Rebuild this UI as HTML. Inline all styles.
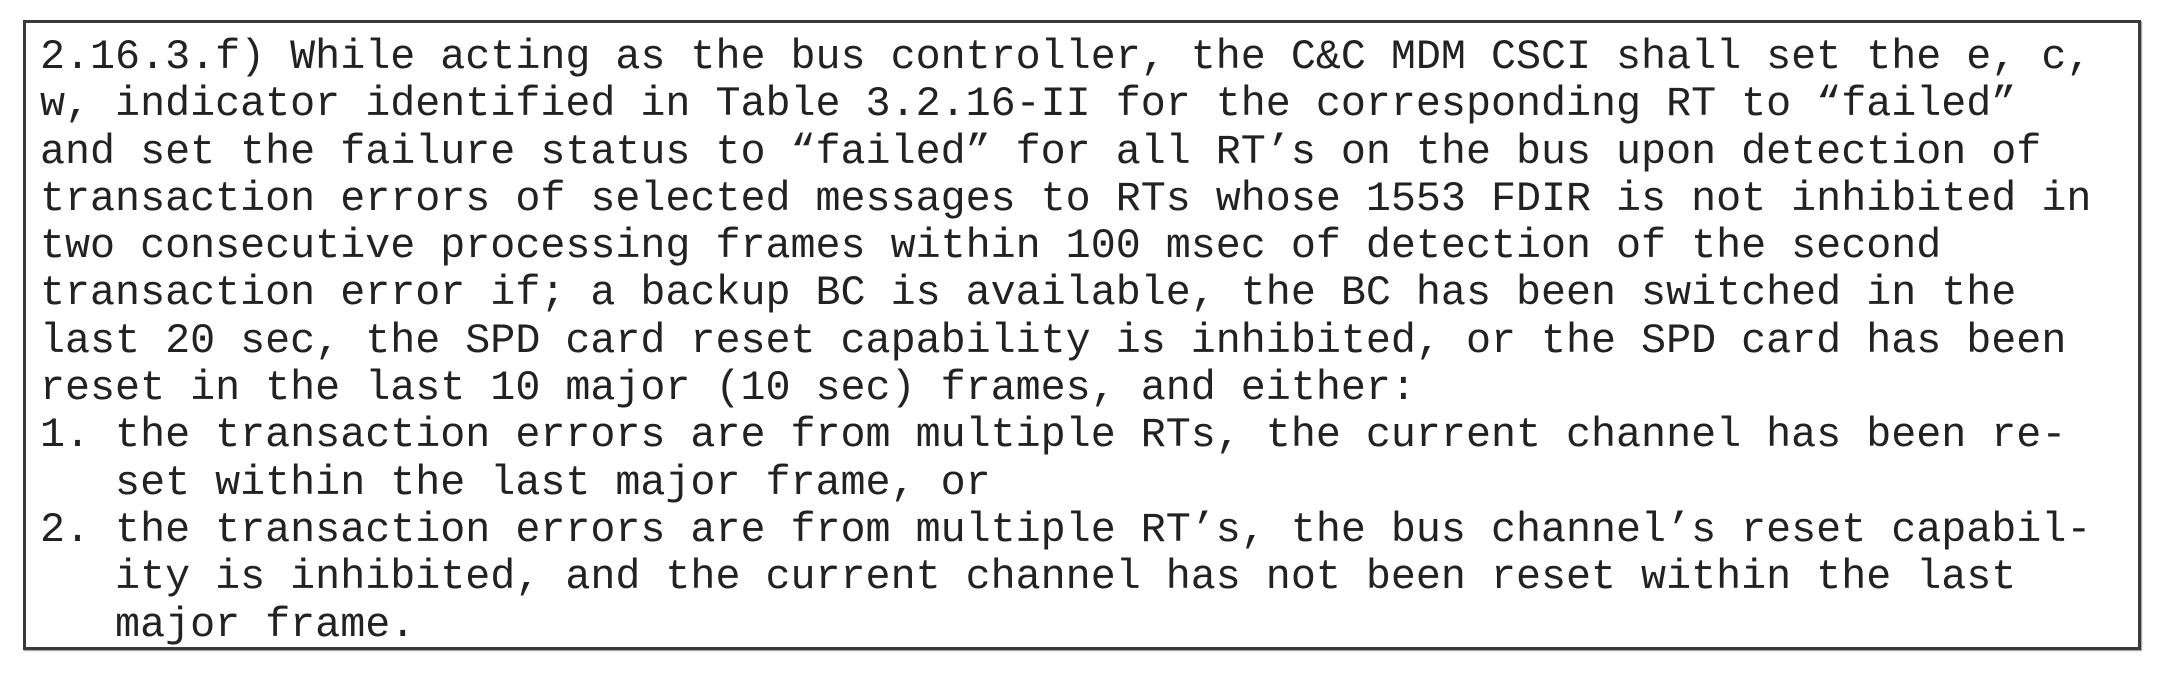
<!DOCTYPE html>
<html><head><meta charset="utf-8"><style>
html,body{margin:0;padding:0;background:#fff;width:2170px;height:690px;overflow:hidden}
.box{position:absolute;left:23px;top:20px;width:2118px;height:630px;border:3px solid #3a3a3a;box-sizing:border-box;box-shadow:1px 1px 1px #999}
.t{position:absolute;left:40px;top:34px;font-family:"Liberation Mono","Courier New",monospace;font-size:41.7px;line-height:47.3px;color:#222;white-space:pre;letter-spacing:0}
</style></head><body>
<div class="box"></div>
<div class="t">2.16.3.f) While acting as the bus controller, the C&amp;C MDM CSCI shall set the e, c,
w, indicator identified in Table 3.2.16-II for the corresponding RT to “failed”
and set the failure status to “failed” for all RT’s on the bus upon detection of
transaction errors of selected messages to RTs whose 1553 FDIR is not inhibited in
two consecutive processing frames within 100 msec of detection of the second
transaction error if; a backup BC is available, the BC has been switched in the
last 20 sec, the SPD card reset capability is inhibited, or the SPD card has been
reset in the last 10 major (10 sec) frames, and either:
1. the transaction errors are from multiple RTs, the current channel has been re-
   set within the last major frame, or
2. the transaction errors are from multiple RT’s, the bus channel’s reset capabil-
   ity is inhibited, and the current channel has not been reset within the last
   major frame.</div>
</body></html>
